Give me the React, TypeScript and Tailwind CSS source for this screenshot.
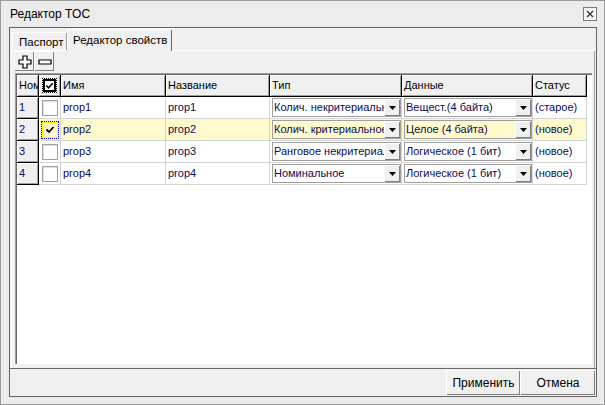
import React from 'react';

type Row = {
  num: string;
  checked: boolean;
  name: string;
  title: string;
  type: string;
  data: string;
  status: string;
};

const rows: Row[] = [
  { num: '1', checked: false, name: 'prop1', title: 'prop1', type: 'Колич. некритериальное', data: 'Вещест.(4 байта)', status: '(старое)' },
  { num: '2', checked: true, name: 'prop2', title: 'prop2', type: 'Колич. критериальное', data: 'Целое (4 байта)', status: '(новое)' },
  { num: '3', checked: false, name: 'prop3', title: 'prop3', type: 'Ранговое некритериальное', data: 'Логическое (1 бит)', status: '(новое)' },
  { num: '4', checked: false, name: 'prop4', title: 'prop4', type: 'Номинальное', data: 'Логическое (1 бит)', status: '(новое)' },
];

function CheckMark({ className }: { className?: string }) {
  return (
    <svg className={className} viewBox="0 0 10 10" width="10" height="10">
      <path d="M1.5 4.5 L4 7 L8.5 2" fill="none" stroke="black" strokeWidth="1.8" />
    </svg>
  );
}

function Combo({ value }: { value: string }) {
  return (
    <div className="flex h-[19px] w-full items-stretch border border-[#a0a0a0] bg-transparent">
      <div className="min-w-0 flex-1 overflow-hidden whitespace-nowrap pl-[1px] leading-[17px] text-[#0c0c50]">{value}</div>
      <div className="flex w-[16px] shrink-0 items-center justify-center border-l border-t border-white bg-[#f0f0f0] shadow-[inset_-1px_-1px_0_#808080]">
        <svg width="7" height="4" viewBox="0 0 7 4">
          <path d="M0 0 H7 L3.5 4 Z" fill="black" />
        </svg>
      </div>
    </div>
  );
}

function HeaderCell({ w, children }: { w: string; children?: React.ReactNode }) {
  return (
    <div
      className={`${w} flex h-[22px] shrink-0 items-center border-b border-r border-black bg-[#f0f0f0] pl-[2px] shadow-[inset_1px_1px_0_#ffffff,inset_-1px_-1px_0_#a0a0a0]`}
    >
      {children}
    </div>
  );
}

function Cell({ w, children, bg }: { w: string; children?: React.ReactNode; bg: string }) {
  return (
    <div className={`${w} ${bg} flex h-[22px] shrink-0 items-center overflow-hidden whitespace-nowrap border-b border-r border-[#d4d4d4] pl-[2px] text-[#0c0c50]`}>
      {children}
    </div>
  );
}

export default function App() {
  return (
    <div className="flex h-[405px] w-[605px] flex-col border border-[#9c9c9c] bg-[#ececec] font-['Liberation_Sans',Arial,sans-serif] text-[11px] text-black">
      {/* title */}
      <div className="flex h-[26px] shrink-0 items-center justify-between pl-[9px] pr-[7px]">
        <span className="text-[12px]">Редактор TOC</span>
        <div className="flex h-[14px] w-[14px] items-center justify-center border border-[#7a7a7a] bg-[#f4f4f4]">
          <svg width="8" height="8" viewBox="0 0 8 8">
            <path d="M1 1 L7 7 M7 1 L1 7" stroke="#333" strokeWidth="1.3" />
          </svg>
        </div>
      </div>

      {/* client */}
      <div className="mb-[7px] ml-[8px] mr-[7px] flex flex-1 flex-col border border-[#646464] bg-[#f0f0f0]">
        <div className="flex flex-1 flex-col px-[1px] pt-[1px]">
          {/* tabs */}
          <div className="flex h-[21px] shrink-0 items-end pl-[1px]">
            <div className="flex h-[18px] w-[55px] items-center border-l border-t border-white pl-[6px] pt-[2px] text-[11.5px] shadow-[inset_-1px_0_0_#a0a0a0]">
              Паспорт
            </div>
            <div className="relative -mb-[1px] flex h-[22px] items-center border-l border-t border-white bg-[#f0f0f0] px-[5px] text-[11.5px] shadow-[inset_-1px_0_0_#696969]">
              Редактор свойств
            </div>
          </div>

          {/* tab panel */}
          <div className="flex flex-1 flex-col border-l border-t border-white pr-[2px] shadow-[inset_-1px_0_0_#a0a0a0]">
            <div className="flex h-[20px] shrink-0 pl-[2px]">
              <button className="flex h-[20px] w-[20px] items-center justify-center border-l border-t border-white bg-[#f0f0f0] shadow-[inset_-1px_-1px_0_#808080]">
                <svg width="14" height="14" viewBox="0 0 14 14">
                  <path d="M5 1 H9 V5 H13 V9 H9 V13 H5 V9 H1 V5 H5 Z" fill="white" stroke="black" strokeWidth="1.2" />
                </svg>
              </button>
              <button className="flex h-[20px] w-[20px] items-center justify-center border-l border-t border-white bg-[#f0f0f0] shadow-[inset_-1px_-1px_0_#808080]">
                <svg width="14" height="14" viewBox="0 0 14 14">
                  <path d="M1 5 H13 V9 H1 Z" fill="white" stroke="black" strokeWidth="1.2" />
                </svg>
              </button>
            </div>

            {/* grid */}
            <div className="ml-[3px] mr-[1px] mt-[2px] flex h-[291px] flex-col border-l border-t border-[#a0a0a0] bg-white shadow-[inset_1px_1px_0_#696969]">
              <div className="flex pl-[1px] pt-[1px]">
                <HeaderCell w="w-[22px]">Ном</HeaderCell>
                <HeaderCell w="w-[22px]">
                  <div className="ml-[1px] flex h-[15px] w-[15px] items-center justify-center border border-dotted border-black">
                    <div className="flex h-[13px] w-[13px] items-center justify-center border-2 border-black bg-white">
                      <CheckMark />
                    </div>
                  </div>
                </HeaderCell>
                <HeaderCell w="w-[105px]">Имя</HeaderCell>
                <HeaderCell w="w-[104px]">Название</HeaderCell>
                <HeaderCell w="w-[132px]">Тип</HeaderCell>
                <HeaderCell w="w-[131px]">Данные</HeaderCell>
                <HeaderCell w="w-[54px]">Статус</HeaderCell>
              </div>
              {rows.map((r) => {
                const bg = r.checked ? 'bg-[#fffacd]' : 'bg-white';
                return (
                  <div key={r.num} className="flex pl-[1px]">
                    <HeaderCell w="w-[22px]">
                      <span className="text-[#0c0c50]">{r.num}</span>
                    </HeaderCell>
                    <div className={`flex h-[22px] w-[22px] shrink-0 items-center justify-center border-b border-r border-[#d4d4d4] ${bg}`}>
                      {r.checked ? (
                        <div className="flex h-[18px] w-[18px] items-center justify-center border border-dotted border-[#0000c0] bg-[#ffff00]">
                          <div className="flex h-[14px] w-[14px] items-center justify-center bg-[#fffacd]">
                            <CheckMark />
                          </div>
                        </div>
                      ) : (
                        <div className="h-[16px] w-[16px] border border-[#a0a0a0] bg-white shadow-[inset_1px_1px_0_#e0e0e0]" />
                      )}
                    </div>
                    <Cell w="w-[105px]" bg={bg}>{r.name}</Cell>
                    <Cell w="w-[104px]" bg={bg}>{r.title}</Cell>
                    <Cell w="w-[132px]" bg={bg}>
                      <Combo value={r.type} />
                    </Cell>
                    <Cell w="w-[131px]" bg={bg}>
                      <Combo value={r.data} />
                    </Cell>
                    <Cell w="w-[54px]" bg={bg}>{r.status}</Cell>
                  </div>
                );
              })}
            </div>
            <div className="flex-1" />
          </div>
        </div>

        {/* bottom bar */}
        <div className="flex h-[28px] shrink-0 justify-end border-t border-[#696969] pr-[1px]">
          <button className="mt-[1px] h-[25px] w-[74px] border-l border-t border-white bg-[#f0f0f0] text-[12px] shadow-[inset_-1px_-1px_0_#808080]">
            Применить
          </button>
          <button className="mt-[1px] h-[25px] w-[75px] border-l border-t border-white bg-[#f0f0f0] text-[12px] shadow-[inset_-1px_-1px_0_#808080]">
            Отмена
          </button>
        </div>
      </div>
    </div>
  );
}
